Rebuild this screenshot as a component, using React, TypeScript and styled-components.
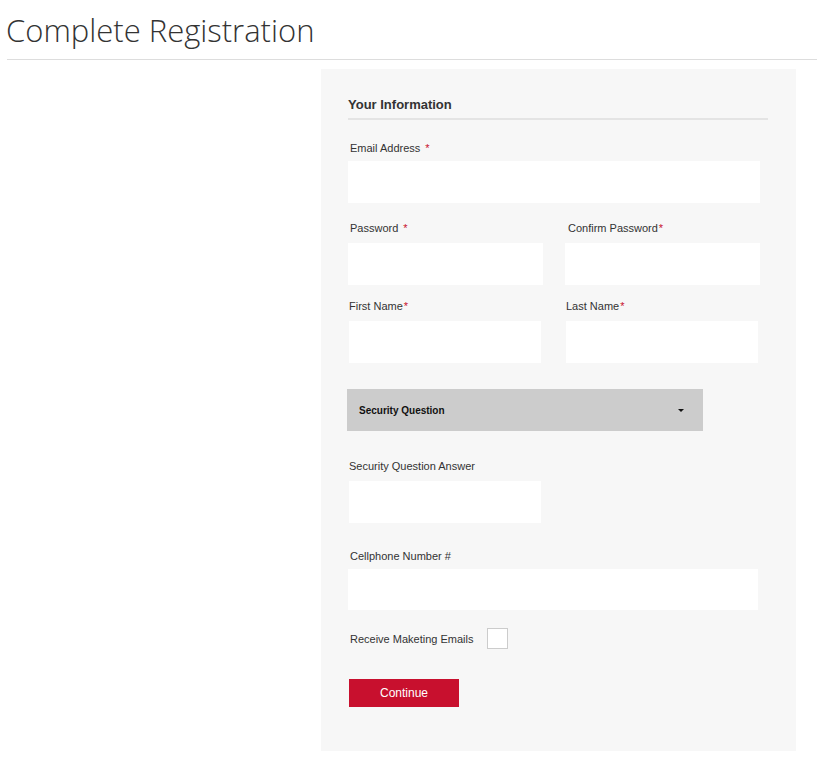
import styled, { createGlobalStyle } from 'styled-components';

const GlobalStyle = createGlobalStyle`
  html, body {
    margin: 0;
    padding: 0;
    background: #ffffff;
  }
  * {
    box-sizing: border-box;
  }
`;

const Page = styled.div`
  width: 817px;
  min-height: 757px;
  padding-left: 6px;
`;

const Title = styled.h1`
  margin: 0 0 0 1px;
  padding-top: 10px;
  height: 60px;
  font-family: 'Open Sans', sans-serif;
  font-weight: 300;
  font-size: 31px;
  line-height: 40px;
  color: #333333;
  border-bottom: 1px solid #dddddd;
  text-indent: -1px;
`;

const Layout = styled.div`
  display: grid;
  grid-template-columns: 315px 475px;
  padding-top: 9px;
`;

const Panel = styled.div`
  grid-column: 2;
  background: #f7f7f7;
  padding: 28px 28px 44px 27px;
  min-height: 681px;
  font-family: 'Liberation Sans', Arial, sans-serif;
  color: #333333;
`;

const SectionTitle = styled.h2`
  margin: 0;
  font-size: 13px;
  line-height: 16px;
  font-weight: 700;
  color: #333333;
  padding-bottom: 5px;
  border-bottom: 2px solid #e4e4e4;
`;

const Row = styled.div<{ $top: number }>`
  display: flex;
  gap: 22px;
  margin-top: ${(p) => p.$top}px;
`;

const Field = styled.div<{ $width: number; $shift?: number }>`
  width: ${(p) => p.$width}px;
  margin-left: ${(p) => p.$shift ?? 0}px;
`;

const Label = styled.label<{ $indent?: number; $gap?: number }>`
  display: block;
  font-size: 11px;
  line-height: 14px;
  color: #333333;
  padding-left: ${(p) => p.$indent ?? 0}px;
  margin-bottom: ${(p) => p.$gap ?? 7}px;
`;

const Star = styled.span<{ $space?: number }>`
  color: #c8102e;
  margin-left: ${(p) => p.$space ?? 1}px;
`;

const Input = styled.input<{ $height?: number }>`
  display: block;
  width: 100%;
  height: ${(p) => p.$height ?? 42}px;
  border: none;
  background: #ffffff;
  outline: none;
  padding: 0 10px;
`;

const Select = styled.div`
  margin-top: 26px;
  margin-left: -1px;
  width: 356px;
  height: 42px;
  background: #cccccc;
  display: flex;
  align-items: center;
  justify-content: space-between;
  padding: 0 19px 0 12px;
  font-size: 10px;
  font-weight: 700;
  color: #111111;
`;

const Caret = styled.span`
  width: 0;
  height: 0;
  border-left: 3px solid transparent;
  border-right: 3px solid transparent;
  border-top: 3px solid #111111;
`;

const CheckRow = styled.div`
  display: flex;
  align-items: center;
  gap: 13px;
  margin-top: 18px;
  padding-left: 2px;
`;

const CheckText = styled.span`
  font-size: 11px;
  line-height: 14px;
`;

const Box = styled.span`
  width: 21px;
  height: 21px;
  background: #ffffff;
  border: 1px solid #cccccc;
`;

const Button = styled.button`
  display: block;
  margin-top: 30px;
  margin-left: 1px;
  width: 110px;
  height: 28px;
  border: none;
  background: #c8102e;
  color: #ffffff;
  font-family: 'Liberation Sans', Arial, sans-serif;
  font-size: 12px;
`;

export default function App() {
  return (
    <>
      <GlobalStyle />
      <Page>
        <Title>Complete Registration</Title>
        <Layout>
          <Panel>
            <SectionTitle>Your Information</SectionTitle>

            <Row $top={21}>
              <Field $width={412}>
                <Label $indent={2} $gap={6}>
                  Email Address<Star $space={5}>*</Star>
                </Label>
                <Input />
              </Field>
            </Row>

            <Row $top={18}>
              <Field $width={195}>
                <Label $indent={2} $gap={8}>
                  Password<Star $space={5}>*</Star>
                </Label>
                <Input />
              </Field>
              <Field $width={195}>
                <Label $indent={3} $gap={8}>
                  Confirm Password<Star>*</Star>
                </Label>
                <Input />
              </Field>
            </Row>

            <Row $top={14}>
              <Field $width={192} $shift={1}>
                <Label $indent={-1} $gap={8}>
                  First Name<Star>*</Star>
                </Label>
                <Input />
              </Field>
              <Field $width={192} $shift={3}>
                <Label $gap={8}>
                  Last Name<Star>*</Star>
                </Label>
                <Input />
              </Field>
            </Row>

            <Select>
              <span>Security Question</span>
              <Caret />
            </Select>

            <Row $top={28}>
              <Field $width={192} $shift={1}>
                <Label $indent={-1} $gap={8}>
                  Security Question Answer
                </Label>
                <Input />
              </Field>
            </Row>

            <Row $top={26}>
              <Field $width={410}>
                <Label $indent={2} $gap={6}>
                  Cellphone Number #
                </Label>
                <Input $height={41} />
              </Field>
            </Row>

            <CheckRow>
              <CheckText>Receive Maketing Emails</CheckText>
              <Box />
            </CheckRow>

            <Button>Continue</Button>
          </Panel>
        </Layout>
      </Page>
    </>
  );
}
